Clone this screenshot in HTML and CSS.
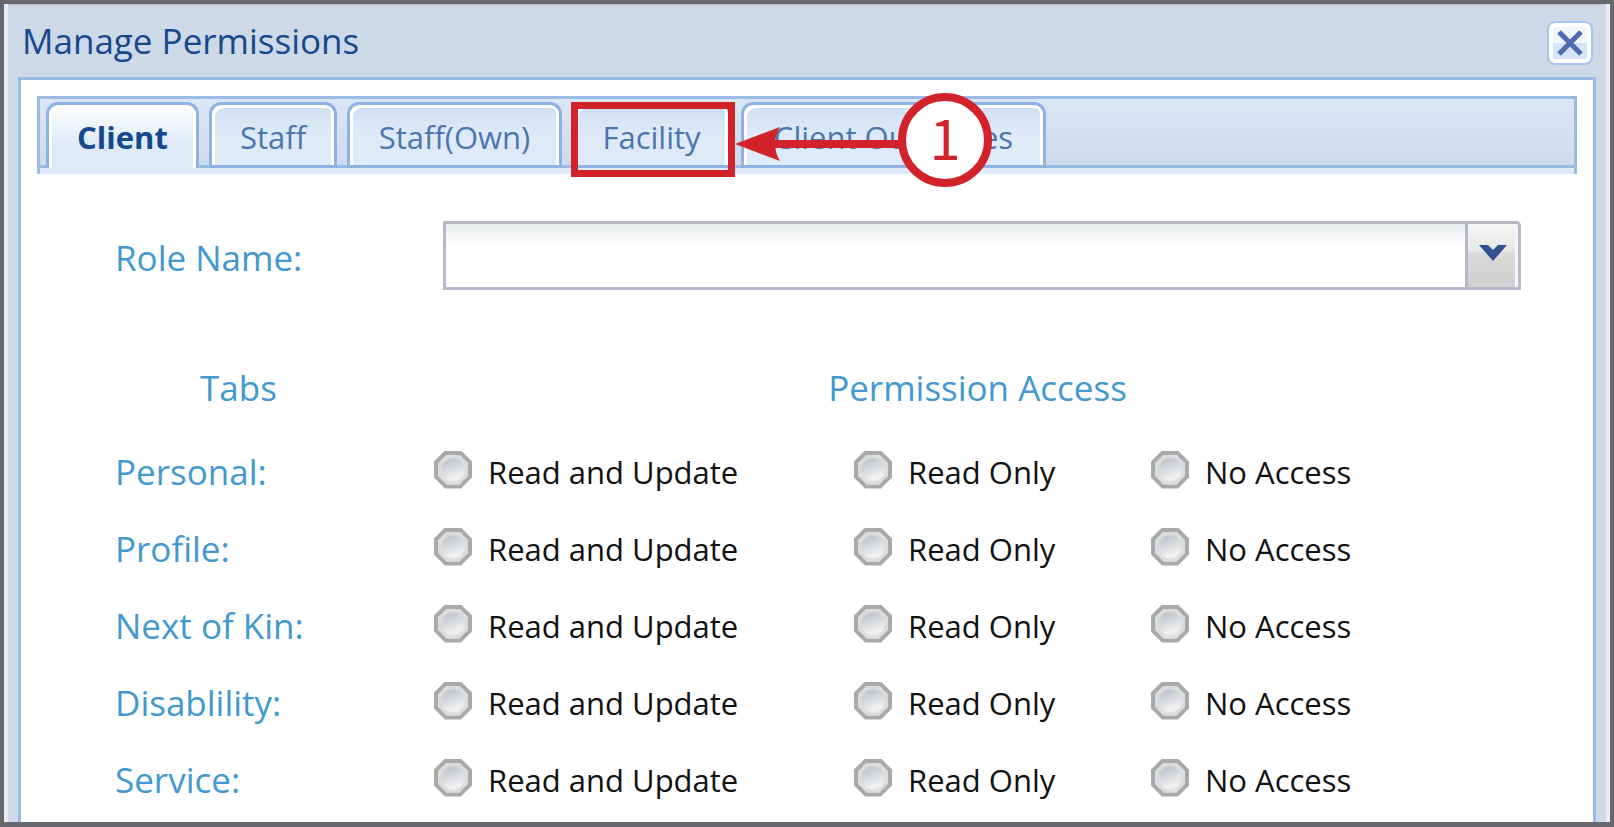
FILE: index.html
```html
<!DOCTYPE html>
<html lang="en">
<head>
    <meta charset="UTF-8">
    <meta name="viewport" content="width=device-width, initial-scale=1.0">
    <title>Manage Permissions</title>
    <link rel="stylesheet" href="styles.css">
</head>
<body>

    <div class="window">
        <div class="window-header">
            <h1>Manage Permissions</h1>
            <button class="close-button" type="button" aria-label="Close">
                <svg viewBox="0 0 28 28" width="28" height="28">
                    <path d="M3 3 L25 25 M25 3 L3 25" stroke="#4f6bb0" stroke-width="5" fill="none"/>
                </svg>
            </button>
        </div>

        <div class="window-body">
            <div class="tab-bar">
                <div class="tabs">
                    <button class="tab active" type="button">Client</button>
                    <button class="tab" type="button">Staff</button>
                    <button class="tab" type="button">Staff(Own)</button>
                    <div class="tab-step">
                        <button class="tab" type="button">Facility</button>
                        <!-- step 1: highlight box, arrow and number -->
                        <div class="callout-box"></div>
                        <svg class="callout-arrow" viewBox="0 0 170 34" width="170" height="34">
                            <path d="M0 17 L45 0 Q35 17 45 34 Z" fill="#d2232a"/>
                            <path d="M38 17 H170" stroke="#d2232a" stroke-width="8"/>
                        </svg>
                        <div class="callout-number">1</div>
                    </div>
                    <button class="tab" type="button">Client Outcomes</button>
                </div>
            </div>

            <form class="permissions">
                <div class="role-row">
                    <label for="role">Role Name:</label>
                    <div class="combo">
                        <select id="role">
                            <option></option>
                        </select>
                        <span class="combo-trigger">
                            <svg viewBox="0 0 30 18" width="30" height="18">
                                <path d="M1 1 H10 L15 6 L20 1 H29 L15 17 Z" fill="#30528f"/>
                            </svg>
                        </span>
                    </div>
                </div>

                <table class="access">
                    <colgroup>
                        <col class="col-name">
                        <col class="col-update">
                        <col class="col-read">
                        <col>
                    </colgroup>
                    <thead>
                        <tr>
                            <th class="tabs-heading">Tabs</th>
                            <th colspan="3">Permission Access</th>
                        </tr>
                    </thead>
                    <tbody>
                        <tr>
                            <th>Personal:</th>
                            <td><label><input type="radio" name="personal">Read and Update</label></td>
                            <td><label><input type="radio" name="personal">Read Only</label></td>
                            <td><label><input type="radio" name="personal">No Access</label></td>
                        </tr>
                        <tr>
                            <th>Profile:</th>
                            <td><label><input type="radio" name="profile">Read and Update</label></td>
                            <td><label><input type="radio" name="profile">Read Only</label></td>
                            <td><label><input type="radio" name="profile">No Access</label></td>
                        </tr>
                        <tr>
                            <th>Next of Kin:</th>
                            <td><label><input type="radio" name="kin">Read and Update</label></td>
                            <td><label><input type="radio" name="kin">Read Only</label></td>
                            <td><label><input type="radio" name="kin">No Access</label></td>
                        </tr>
                        <tr>
                            <th>Disablility:</th>
                            <td><label><input type="radio" name="disability">Read and Update</label></td>
                            <td><label><input type="radio" name="disability">Read Only</label></td>
                            <td><label><input type="radio" name="disability">No Access</label></td>
                        </tr>
                        <tr>
                            <th>Service:</th>
                            <td><label><input type="radio" name="service">Read and Update</label></td>
                            <td><label><input type="radio" name="service">Read Only</label></td>
                            <td><label><input type="radio" name="service">No Access</label></td>
                        </tr>
                    </tbody>
                </table>
            </form>
        </div>
    </div>

</body>
</html>
```

FILE: styles.css
```css
:root {
    --frame: #67686b;
    --window-bg: #cdd9e7;
    --border: #99bbe5;
    --tab-bg: #deeaf8;
    --title: #15498b;
    --label: #4199d0;
    --red: #d2232a;
}

* {
    box-sizing: border-box;
}

body {
    margin: 0;
    font-family: "Open Sans", "Noto Sans", sans-serif;
    background: var(--frame);
}

button,
select {
    font-family: inherit;
    margin: 0;
}

.window {
    min-height: 100vh;
    display: flex;
    flex-direction: column;
    border: 4px solid var(--frame);
    border-bottom-width: 5px;
    background: var(--window-bg);
    box-shadow: inset 4px 0 #e9edf9, inset -4px 0 #e9edf9, inset 0 1px #b9c3d0;
    padding: 0 14px;
}

.window-header {
    display: flex;
    justify-content: space-between;
    align-items: center;
    height: 73px;
    padding: 6px 3px 2px 4px;
}

h1 {
    margin: 0;
    font-size: 35px;
    font-weight: 400;
    line-height: 50px;
    padding-bottom: 4px;
    color: var(--title);
}

.close-button {
    display: flex;
    align-items: center;
    justify-content: center;
    width: 46px;
    height: 44px;
    padding: 0;
    border: 2px solid #a5c6ec;
    border-radius: 8px;
    background: linear-gradient(#eef7fd 50%, #d3e5f7 50%);
    box-shadow: inset 0 0 0 4px #fff;
    cursor: pointer;
}

.window-body {
    flex: 1;
    padding: 16px 16px 0;
    border: 3px solid var(--border);
    border-bottom: 0;
    background: #fff;
}

/* Tab strip */
.tab-bar {
    border: 3px solid var(--border);
    border-bottom: 0;
    background: linear-gradient(#dbe6f4, #cbdaec);
}

.tabs {
    display: grid;
    grid-template-columns: 153px 128px 215px 159px 305px;
    gap: 10px;
    padding: 3px 6px 0;
    border-bottom: 6px solid var(--tab-bg);
    box-shadow: inset 0 -3px var(--border);
}

.tab {
    width: 100%;
    height: 66px;
    padding: 4px 0 0;
    border: 3px solid #8db2e3;
    border-radius: 12px 12px 0 0;
    background: linear-gradient(#cfdff0, var(--tab-bg) 50%);
    box-shadow: inset 3px 3px #fff, inset -3px 0 #fff;
    font-size: 31px;
    line-height: 56px;
    color: #4a76ae;
    cursor: pointer;
}

.tab.active {
    padding: 0;
    border-bottom: 0;
    background: linear-gradient(#fff, var(--tab-bg) 60%);
    font-weight: 700;
    color: var(--title);
}

.tab-step {
    position: relative;
}

.callout-box {
    position: absolute;
    inset: 0 -4px -9px -1px;
    border: 7px solid var(--red);
}

.callout-arrow {
    position: absolute;
    left: 163px;
    top: 25px;
    z-index: 1;
}

.callout-number {
    position: absolute;
    left: 326px;
    top: -9px;
    z-index: 2;
    width: 94px;
    height: 94px;
    border: 8px solid var(--red);
    border-radius: 50%;
    background: #fff;
    font-family: "Noto Sans CJK SC", sans-serif;
    font-size: 56px;
    line-height: 70px;
    text-align: center;
    color: var(--red);
}

/* Form */
.permissions {
    padding: 47px 56px 0 78px;
}

.role-row {
    display: flex;
    align-items: center;
}

.role-row label {
    width: 328px;
    padding-top: 4px;
    font-size: 35px;
    color: var(--label);
}

.combo {
    flex: 1;
    display: grid;
    grid-template-columns: 1fr 56px;
    height: 69px;
}

.combo select {
    grid-area: 1 / 1 / 2 / 3;
    appearance: none;
    padding: 0 70px 0 12px;
    border: 3px solid #b5b8c8;
    border-radius: 0 5px 0 0;
    background: linear-gradient(#e6eaeb, #f5f7f7 12px, #fff 22px);
    font-size: 31px;
}

.combo-trigger {
    grid-area: 1 / 2;
    display: flex;
    align-items: center;
    justify-content: center;
    padding-bottom: 6px;
    border: 3px solid #b5b8c8;
    border-radius: 0 5px 0 0;
    background: linear-gradient(#f5f5f5, #e6e6e6 45%, #dadada 45%, #cfcfcf);
    box-shadow: inset -3px 2px #f6f6f6;
    pointer-events: none;
}

.access {
    width: 100%;
    margin-top: 60px;
    border-collapse: collapse;
    table-layout: fixed;
}

.col-name {
    width: 319px;
}

.col-update {
    width: 420px;
}

.col-read {
    width: 297px;
}

.access th,
.access td {
    height: 77px;
    padding: 0;
    text-align: left;
    white-space: nowrap;
}

.access th {
    font-size: 35px;
    font-weight: 400;
    color: var(--label);
}

.access thead th {
    height: 83px;
    padding-bottom: 8px;
    text-align: center;
}

.access thead .tabs-heading {
    padding-right: 72px;
}

.access label {
    display: flex;
    align-items: center;
    gap: 16px;
    font-size: 31px;
    color: #111;
}

/* Octagonal radio with a sunken centre */
.access input {
    appearance: none;
    display: grid;
    width: 38px;
    height: 38px;
    margin: 0 0 4px;
    padding: 4px;
    background: #a9a9a9;
}

.access input::before {
    content: "";
    background: radial-gradient(circle, transparent 10px, #dcdcdc 13px), linear-gradient(160deg, #bcc3cc 20%, #f0f0f0 70%);
}

.access input,
.access input::before {
    clip-path: polygon(29% 0, 71% 0, 100% 29%, 100% 71%, 71% 100%, 29% 100%, 0 71%, 0 29%);
}
```
